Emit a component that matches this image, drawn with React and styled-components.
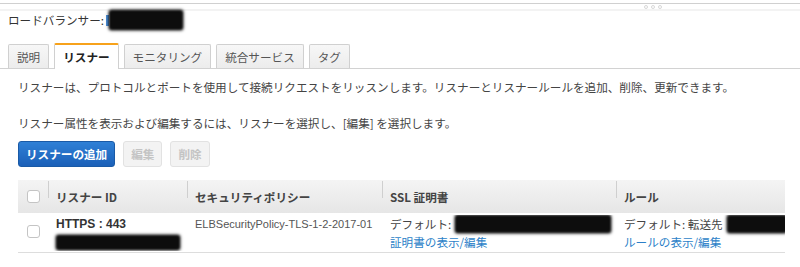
import React from "react";
import styled, { createGlobalStyle, css } from "styled-components";

const GlobalStyle = createGlobalStyle`
  body {
    margin: 0;
    background: #fff;
    font-family: "Noto Sans CJK JP", "Liberation Sans", sans-serif;
    font-size: 11.6px;
    color: #444;
  }
`;

const TopRule = styled.div`
  margin-top: 3px;
  height: 1px;
  background: #d0d0d0;
`;

const Grip = styled.div`
  display: flex;
  align-items: center;
  gap: 3px;
  height: 5px;
  padding-left: 644px;
  border-bottom: 2px solid #f3f3f3;
`;

const GripDot = styled.span`
  width: 4px;
  height: 4px;
  border-radius: 50%;
  border: 1px solid #d8d8d8;
  box-sizing: border-box;
`;

const TitleRow = styled.div`
  display: flex;
  align-items: center;
  height: 18px;
  padding-left: 8px;
  color: #333;
`;

const Caret = styled.span`
  width: 3px;
  height: 11px;
  margin-left: 2px;
  background: #4a8fd8;
`;

const Redact = styled.span`
  display: inline-block;
  flex-shrink: 0;
  width: ${({ w }) => w}px;
  height: ${({ h }) => h}px;
  background: #0d0d0d;
  border-radius: 3px;
  filter: blur(0.8px);
  box-shadow: 0 0 2px 1px rgba(0, 0, 0, 0.55);
`;

const TabBar = styled.div`
  display: flex;
  align-items: flex-end;
  gap: 5px;
  margin-top: 14px;
  padding-left: 8px;
  height: 25px;
  border-bottom: 1px solid #d2d2d2;
`;

const Tab = styled.div`
  display: flex;
  align-items: center;
  justify-content: center;
  box-sizing: border-box;
  height: 24px;
  padding: 0 8px;
  border: 1px solid #d0d0d0;
  border-bottom: none;
  border-radius: 2px 2px 0 0;
  background: linear-gradient(#f7f7f7, #ececec);
  color: #555;
  ${({ active }) =>
    active &&
    css`
      height: 26px;
      margin-bottom: -1px;
      border-top: 2px solid #f7a21b;
      background: #fff;
      color: #222;
      font-weight: bold;
    `}
`;

const Content = styled.div`
  padding: 0 18px;
`;

const Para = styled.p`
  margin: ${({ top }) => top}px 0 0;
  line-height: 18px;
  color: #444;
`;

const Actions = styled.div`
  display: flex;
  gap: 8px;
  margin-top: 9px;
`;

const Button = styled.button`
  box-sizing: border-box;
  height: 26px;
  padding: 0 7px;
  font-family: inherit;
  font-size: 11.6px;
  font-weight: bold;
  border-radius: 3px;
  ${({ primary }) =>
    primary
      ? css`
          color: #fff;
          background: linear-gradient(#2f80d6, #1b60b8);
          border: 1px solid #1a5aa6;
        `
      : css`
          color: #c4c4c4;
          background: #f3f3f3;
          border: 1px solid #e2e2e2;
        `}
`;

const Table = styled.div`
  margin-top: 13px;
  width: 767px;
`;

const grid = css`
  display: grid;
  grid-template-columns: 30px 139px 195px 234px 169px;
`;

const HeadRow = styled.div`
  ${grid};
  height: 33px;
  align-items: center;
  background: linear-gradient(#f4f4f4, #e6e6e6);
  font-weight: bold;
  color: #444;
`;

const HeadCell = styled.div`
  position: relative;
  padding-left: 8px;
  &::before {
    content: "";
    position: absolute;
    left: 0;
    top: -8px;
    height: 17px;
    border-left: 1px solid #cfcfcf;
  }
`;

const CheckCell = styled.div`
  display: flex;
  justify-content: center;
`;

const Check = styled.span`
  width: 13px;
  height: 13px;
  box-sizing: border-box;
  border: 1px solid #c4c4c4;
  border-radius: 3px;
  background: #fff;
`;

const BodyRow = styled.div`
  ${grid};
  height: 40px;
  border-bottom: 1px solid #ddd;
  align-items: start;
  padding-top: 2px;
  box-sizing: border-box;
`;

const BodyCheck = styled(CheckCell)`
  padding-top: 10px;
`;

const Cell = styled.div`
  padding-left: 8px;
  line-height: 18px;
  overflow: hidden;
  white-space: nowrap;
`;

const Line = styled.div`
  display: flex;
  align-items: center;
  height: 18px;
  gap: 4px;
`;

const Strong = styled.span`
  font-family: "Liberation Sans", sans-serif;
  font-weight: bold;
  font-size: 12px;
  color: #333;
`;

const Latin = styled.span`
  font-family: "Liberation Sans", sans-serif;
  font-size: 11px;
  color: #555;
`;

const Link = styled.a`
  color: #2c7fc8;
  text-decoration: none;
`;

export default function App() {
  return (
    <>
      <GlobalStyle />
      <TopRule />
      <Grip>
        <GripDot />
        <GripDot />
        <GripDot />
      </Grip>
      <TitleRow>
        ロードバランサー:
        <Caret />
        <Redact w={74} h={20} />
      </TitleRow>
      <TabBar>
        <Tab>説明</Tab>
        <Tab active>リスナー</Tab>
        <Tab>モニタリング</Tab>
        <Tab>統合サービス</Tab>
        <Tab>タグ</Tab>
      </TabBar>
      <Content>
        <Para top={9}>
          リスナーは、プロトコルとポートを使用して接続リクエストをリッスンします。リスナーとリスナールールを追加、削除、更新できます。
        </Para>
        <Para top={18}>
          リスナー属性を表示および編集するには、リスナーを選択し、[編集] を選択します。
        </Para>
        <Actions>
          <Button primary>リスナーの追加</Button>
          <Button disabled>編集</Button>
          <Button disabled>削除</Button>
        </Actions>
        <Table>
          <HeadRow>
            <CheckCell>
              <Check />
            </CheckCell>
            <HeadCell>リスナー ID</HeadCell>
            <HeadCell>セキュリティポリシー</HeadCell>
            <HeadCell>SSL 証明書</HeadCell>
            <HeadCell>ルール</HeadCell>
          </HeadRow>
          <BodyRow>
            <BodyCheck>
              <Check />
            </BodyCheck>
            <Cell>
              <Line>
                <Strong>HTTPS : 443</Strong>
              </Line>
              <Line>
                <Redact w={124} h={15} />
              </Line>
            </Cell>
            <Cell>
              <Line>
                <Latin>ELBSecurityPolicy-TLS-1-2-2017-01</Latin>
              </Line>
            </Cell>
            <Cell>
              <Line>
                デフォルト:
                <Redact w={156} h={18} />
              </Line>
              <Line>
                <Link href="#">証明書の表示/編集</Link>
              </Line>
            </Cell>
            <Cell>
              <Line>
                デフォルト: 転送先
                <Redact w={60} h={18} />
              </Line>
              <Line>
                <Link href="#">ルールの表示/編集</Link>
              </Line>
            </Cell>
          </BodyRow>
        </Table>
      </Content>
    </>
  );
}
